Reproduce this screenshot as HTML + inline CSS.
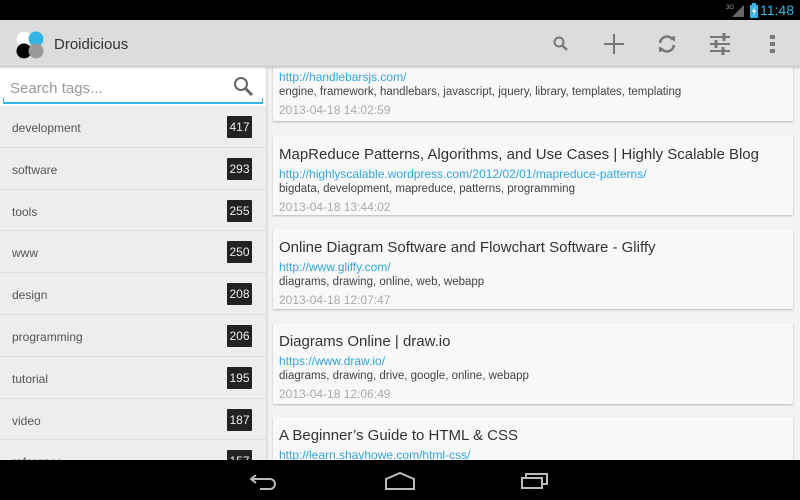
<!DOCTYPE html>
<html><head><meta charset="utf-8"><style>
*{margin:0;padding:0;box-sizing:border-box}
body{width:800px;height:500px;overflow:hidden;font-family:"Liberation Sans",sans-serif;background:#f4f3f4;position:relative}
#status{position:absolute;left:0;top:0;width:800px;height:20px;background:#000}
#clock{position:absolute;right:6px;top:2px;color:#33b5e5;font-size:14px}
#bar{position:absolute;top:20px;left:0;width:800px;height:47px;background:#dcdcdc;border-bottom:1px solid #c8c8c8;box-shadow:0 1px 2px rgba(0,0,0,.15);z-index:3}
#bar .t{position:absolute;left:54px;top:16px;font-size:15px;color:#333}
#side{position:absolute;top:67px;left:0;width:266px;height:393px;background:#eeecee;box-shadow:1px 0 3px rgba(0,0,0,.15);z-index:2;overflow:hidden}
#search{height:39px;background:#fff;position:relative}
#search .in{position:absolute;left:3px;right:3px;top:31px;height:6px;border-bottom:2px solid #33b5e5;border-left:1px solid #33b5e5;border-right:1px solid #33b5e5}
#search span{position:absolute;left:10px;top:13px;font-size:15px;color:#999}
.row{height:41.8px;border-bottom:1px solid #dcdadc;position:relative}
.row span{position:absolute;left:12px;top:15px;font-size:12px;color:#555}
.row b{position:absolute;left:227px;top:10px;width:25px;height:22px;background:#222;color:#eee;font-weight:normal;font-size:12px;text-align:center;line-height:22px;border-radius:1px}
.card{position:absolute;left:273px;width:520px;background:#f9f8f9;box-shadow:0 1px 2px rgba(0,0,0,.25);padding:0 6px}
.card h{display:block;font-size:15px;color:#333;margin-top:10px;height:21px}
.card .u{font-size:12px;color:#33a5dd;height:16px}
.card .g{font-size:11.5px;color:#444;height:17px}
.card .d{font-size:12px;color:#aaa}
#nav{position:absolute;left:0;top:460px;width:800px;height:40px;background:#000;z-index:5}
</style></head><body>
<div id="status">
<svg style="position:absolute;left:726px;top:3px" width="20" height="14"><text x="0" y="6" font-size="6" fill="#aaa" font-family="Liberation Sans">3G</text><polygon points="6,14 18,2 18,14" fill="#666"/></svg>
<svg style="position:absolute;left:750px;top:3px" width="8" height="15"><rect x="2" y="0" width="4" height="2" fill="#33b5e5"/><rect x="0" y="2" width="8" height="13" fill="#33b5e5"/><polygon points="5,3 2,9 4,9 3,14 6,7 4,7" fill="#fff"/></svg>
<div id="clock">11:48</div>
</div>
<div id="bar">
<svg style="position:absolute;left:15px;top:9px" width="32" height="32"><circle cx="9" cy="10" r="7.5" fill="#fff"/><circle cx="21" cy="10" r="7.5" fill="#33b5e5"/><circle cx="9" cy="22" r="7.5" fill="#000"/><circle cx="21" cy="22" r="7.5" fill="#999"/></svg>
<div class="t">Droidicious</div>
<svg style="position:absolute;left:553px;top:16px" width="16" height="16" fill="none" stroke="#777" stroke-width="2"><circle cx="6" cy="6" r="4.5"/><line x1="9.5" y1="9.5" x2="14" y2="14" stroke-width="2.5"/></svg>
<svg style="position:absolute;left:603px;top:13px" width="22" height="22" stroke="#777" stroke-width="2"><line x1="11" y1="1" x2="11" y2="21"/><line x1="1" y1="11" x2="21" y2="11"/></svg>
<svg style="position:absolute;left:656px;top:13px" width="22" height="22" fill="none" stroke="#777" stroke-width="2.5"><path d="M4 10 A7 7 0 0 1 17 7"/><polygon points="14,4 19,3 19,9" fill="#777" stroke="none"/><path d="M18 12 A7 7 0 0 1 5 15"/><polygon points="8,18 3,19 3,13" fill="#777" stroke="none"/></svg>
<svg style="position:absolute;left:709px;top:13px" width="22" height="22" stroke="#777" stroke-width="2"><line x1="1" y1="4" x2="21" y2="4"/><line x1="1" y1="11" x2="21" y2="11"/><line x1="1" y1="18" x2="21" y2="18"/><line x1="15" y1="0" x2="15" y2="8" stroke-width="3"/><line x1="7" y1="7" x2="7" y2="15" stroke-width="3"/><line x1="14" y1="14" x2="14" y2="22" stroke-width="3"/></svg>
<svg style="position:absolute;left:770px;top:14px" width="6" height="20" fill="#777"><rect x="0" y="1" width="5" height="4"/><rect x="0" y="8" width="5" height="4"/><rect x="0" y="15" width="5" height="4"/></svg>
</div>
<div id="side">
<div id="search"><div class="in"></div><span>Search tags...</span>
<svg style="position:absolute;left:233px;top:9px" width="22" height="22" fill="none" stroke="#666" stroke-width="2"><circle cx="8" cy="8" r="6"/><line x1="12.5" y1="12.5" x2="19" y2="19" stroke-width="3"/></svg></div>
<div class="row"><span>development</span><b>417</b></div>
<div class="row"><span>software</span><b>293</b></div>
<div class="row"><span>tools</span><b>255</b></div>
<div class="row"><span>www</span><b>250</b></div>
<div class="row"><span>design</span><b>208</b></div>
<div class="row"><span>programming</span><b>206</b></div>
<div class="row"><span>tutorial</span><b>195</b></div>
<div class="row"><span>video</span><b>187</b></div>
<div class="row"><span>reference</span><b>157</b></div>
</div>
<div class="card" style="top:60px;height:61px;padding-top:10px">
<div class="u">http://handlebarsjs.com/</div>
<div class="g">engine, framework, handlebars, javascript, jquery, library, templates, templating</div>
<div class="d">2013-04-18 14:02:59</div></div>
<div class="card" style="top:136px;height:79px">
<h>MapReduce Patterns, Algorithms, and Use Cases | Highly Scalable Blog</h>
<div class="u">http://highlyscalable.wordpress.com/2012/02/01/mapreduce-patterns/</div>
<div class="g">bigdata, development, mapreduce, patterns, programming</div>
<div class="d">2013-04-18 13:44:02</div></div>
<div class="card" style="top:229px;height:80px">
<h>Online Diagram Software and Flowchart Software - Gliffy</h>
<div class="u">http://www.gliffy.com/</div>
<div class="g">diagrams, drawing, online, web, webapp</div>
<div class="d">2013-04-18 12:07:47</div></div>
<div class="card" style="top:323px;height:81px">
<h>Diagrams Online | draw.io</h>
<div class="u">https://www.draw.io/</div>
<div class="g">diagrams, drawing, drive, google, online, webapp</div>
<div class="d">2013-04-18 12:06:49</div></div>
<div class="card" style="top:417px;height:60px">
<h>A Beginner’s Guide to HTML &amp; CSS</h>
<div class="u">http://learn.shayhowe.com/html-css/</div></div>
<div id="nav">
<svg style="position:absolute;left:248px;top:11px" width="32" height="20" fill="none" stroke="#bbb" stroke-width="2"><path d="M8 4 L3 8 L8 12"/><path d="M3 8 H22 A5 5 0 0 1 22 18 H12"/></svg>
<svg style="position:absolute;left:384px;top:12px" width="32" height="18" fill="none" stroke="#bbb" stroke-width="2"><path d="M2 7 L16 1 L30 7 V17 H2 Z"/></svg>
<svg style="position:absolute;left:520px;top:12px" width="30" height="18" fill="none" stroke="#bbb" stroke-width="2"><rect x="2" y="6" width="20" height="10"/><path d="M6 6 V2 H27 V12 H22"/></svg>
</div>
</body></html>
